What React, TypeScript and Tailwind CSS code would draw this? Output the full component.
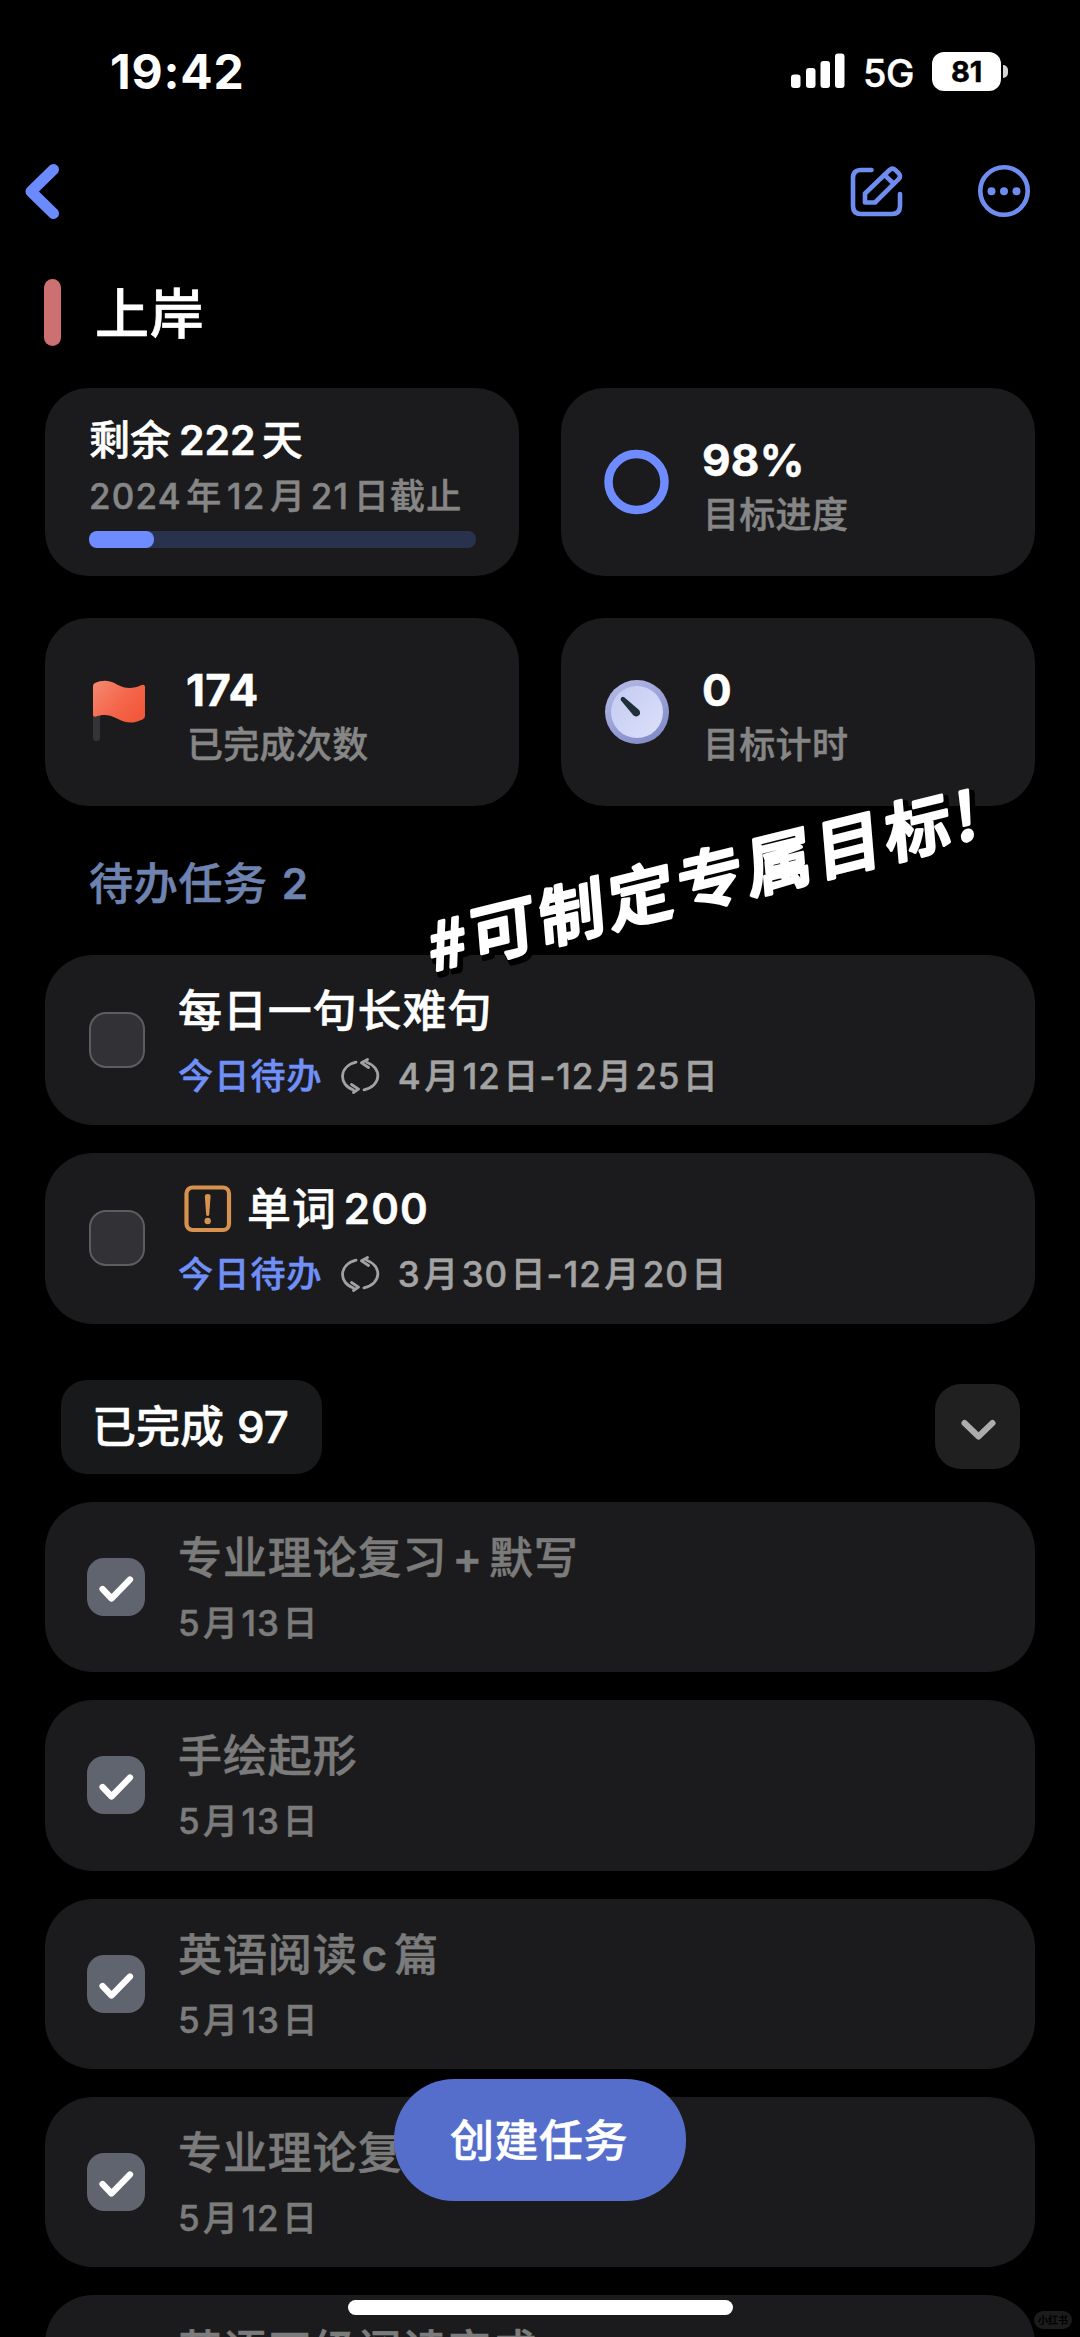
import type { ReactNode } from "react";

const SANS = "font-['Inter','Noto_Sans_CJK_SC',sans-serif]";

// Splits a date such as 4月12日 into number runs and ideographs, with a hair of air between them.
function DateText({ text, wide = false }: { text: string; wide?: boolean }) {
  const runs = text.split(/(\d+)/).filter(Boolean);
  return (
    <>
      {runs.map((run, i) => {
        if (!/\d/.test(run)) return <span key={i}>{run}</span>;
        const afterDash = i > 0 && runs[i - 1].endsWith("-");
        const flush = i === 0 || afterDash;
        if (wide) return <span key={i} className={flush ? "mr-[4.600px]" : "mx-[4.600px]"}>{run}</span>;
        return <span key={i} className={flush ? "mr-[2.500px]" : "mx-[2.500px]"}>{run}</span>;
      })}
    </>
  );
}

function StatusBar() {
  return (
    <div className="flex h-[142px] shrink-0 items-start justify-between pl-[110px] pr-[72px] pt-[52px]">
      <div className="h-10 text-[48px] font-bold leading-10 tracking-[0.800px] [-webkit-text-stroke:0px]">19:42</div>
      <div className="-mt-px flex h-10 items-center">
        <svg width="54" height="36" viewBox="0 0 54 36" fill="#fff">
          <rect x="0" y="21.5" width="9.5" height="13.5" rx="3" />
          <rect x="15" y="15" width="9.5" height="20" rx="3" />
          <rect x="29.5" y="8" width="9.5" height="27" rx="3" />
          <rect x="44" y="0.5" width="9.5" height="34.5" rx="3" />
        </svg>
        <div className="ml-[18px] w-[52px] pt-1 text-[38px] font-medium leading-9 tracking-[-0.500px]">5G</div>
        <div className="ml-[17px] flex h-[39px] w-[69px] items-center justify-center rounded-[12px] bg-white text-[29px] font-bold leading-none tracking-[-0.200px] text-black">
          81
        </div>
        <div className="ml-[2px] h-[13px] w-[5px] rounded-r-full bg-[#d5d5d5]" />
      </div>
    </div>
  );
}

function NavBar() {
  return (
    <div className="flex h-[98px] shrink-0 items-center justify-between pl-[23px] pr-[49px]">
      <svg width="40" height="60" viewBox="0 0 40 60" fill="none" stroke="#6b8afd" strokeWidth="11" strokeLinecap="round" strokeLinejoin="round">
        <path d="M30.5 8.500L8 30.500L30.500 52.500" />
      </svg>
      <div className="flex items-center gap-[74px]">
        <svg width="54" height="54" viewBox="0 0 54 54" fill="none" stroke="#6f8cf0" strokeWidth="4.600" strokeLinecap="round" strokeLinejoin="round">
          <path d="M22.500 6H12Q4 6 4 14V42Q4 50 12 50H43Q51 50 51 42V30" />
          <path d="M16 38V29L40.500 5.500Q43.500 2.800 46.500 5.600L49.800 8.900Q52.200 11.800 49.600 14.600L26 38Z" transform="translate(0 0.500)" />
          <path d="M35.500 11L44.500 19.500" />
        </svg>
        <svg width="54" height="54" viewBox="0 0 54 54">
          <circle cx="27" cy="27" r="23.700" fill="none" stroke="#6f8cf0" strokeWidth="4.600" />
          <circle cx="14.500" cy="27.300" r="4" fill="#6f8cf0" />
          <circle cx="27" cy="27.300" r="4" fill="#6f8cf0" />
          <circle cx="39.500" cy="27.300" r="4" fill="#6f8cf0" />
        </svg>
      </div>
    </div>
  );
}

function StatCard({ icon, value, label }: { icon: ReactNode; value: string; label: string }) {
  return (
    <div className="flex h-[188px] items-center rounded-[44px] bg-[#1b1b1d] pl-[43px]">
      <div className="flex w-[98px] items-center">{icon}</div>
      <div className="flex flex-col pt-[12px]">
        <div className="h-[52px] text-[44px] font-bold leading-[52px] tracking-[0.300px]">{value}</div>
        <div className="h-[56px] pl-[1px] text-[36px] font-medium leading-[58px] tracking-[0.300px] text-[#868686]">{label}</div>
      </div>
    </div>
  );
}

function FlagIcon() {
  return (
    <svg width="66" height="66" viewBox="0 0 66 66">
      <defs>
        <linearGradient id="flag" x1="0" y1="0" x2="1" y2="0.700">
          <stop offset="0" stopColor="#f58a70" />
          <stop offset="0.600" stopColor="#f4664b" />
          <stop offset="1" stopColor="#f2583a" />
        </linearGradient>
      </defs>
      <rect x="5" y="30" width="7" height="32" rx="3" fill="#343436" />
      <path d="M5 7Q5 5 7 4C15 0.500 22 1.500 29 5.500C38 10.500 46 9.500 53 6.200Q57 4.500 57 8.500V37Q57 39.500 54.500 40.500C45 45 38 44.500 29 39.500C21 35.500 15 35 8 37.500Q5 38.500 5 35.500Z" fill="url(#flag)" />
    </svg>
  );
}

function ClockIcon() {
  return (
    <svg width="66" height="66" viewBox="0 0 66 66">
      <defs>
        <linearGradient id="rim" x1="0.200" y1="0" x2="0.800" y2="1">
          <stop offset="0" stopColor="#b4b9e8" />
          <stop offset="1" stopColor="#8089c4" />
        </linearGradient>
        <linearGradient id="face" x1="0" y1="0" x2="1" y2="1">
          <stop offset="0" stopColor="#c5cbf1" />
          <stop offset="1" stopColor="#dbe0fa" />
        </linearGradient>
      </defs>
      <circle cx="33" cy="33" r="32" fill="url(#rim)" />
      <circle cx="33" cy="33" r="26" fill="url(#face)" />
      <path d="M17 21.500Q16 19.500 17.500 18.300Q19 17.300 20.500 18.500L34.500 30.500Q37 33 35.500 35.800Q33 39 29.500 36.500Z" fill="#20303a" />
    </svg>
  );
}

function RepeatIcon() {
  return (
    <svg width="39" height="36" viewBox="0 0 39 36" fill="none" stroke="#a2a2a2" strokeWidth="2.800" strokeLinecap="round" strokeLinejoin="round">
      <path d="M15 4.200C-2.500 8.500-2.500 27 12.500 32" />
      <path d="M10.500 26.500L17.500 31.200L12.500 34.500" />
      <path d="M23 31.800C41 27.500 41 9.500 25.500 4.200" />
      <path d="M27.500 9.500L20.500 4.800L26.500 1.500" />
    </svg>
  );
}

function PriorityIcon() {
  return (
    <svg className="ml-[6px] mr-[15px]" width="48" height="48" viewBox="0 0 48 48">
      <rect x="2.500" y="2.500" width="42.500" height="42.500" rx="6" fill="none" stroke="#d8924f" strokeWidth="4.200" />
      <path d="M20.800 11Q21 9 23.700 9Q26.600 9 26.600 11L25.200 30Q24.800 31 23.700 31Q22.600 31 22.200 30Z" fill="#d8924f" />
      <circle cx="23.700" cy="36" r="3.200" fill="#d8924f" />
    </svg>
  );
}

function OpenTask({ title, range, count }: { title: string; range: string; count?: string }) {
  return (
    <div className="flex h-[170.400px] shrink-0 items-start rounded-[48px] bg-[#1b1b1d] pl-[44px]">
      <div className="mt-[57px] size-[56px] rounded-[17px] border-[2.500px] border-[#5a5d61] bg-[#323135]" />
      <div className="ml-[33px] flex flex-col pt-[26px]">
        <div className="flex h-[60px] items-center text-[44px] font-medium leading-[60px] tracking-[0.900px]">
          {count ? <PriorityIcon /> : null}
          <span>{title}</span>
          {count ? <span className="ml-[7px] text-[42px] font-semibold tracking-[1.200px]">{count}</span> : null}
        </div>
        <div className="mt-[8px] flex h-[54px] items-center text-[35px] font-medium leading-[54px] tracking-[1.200px]">
          <span className="text-[#7090f8]">今日待办</span>
          <span className="mx-[18px]"><RepeatIcon /></span>
          <span className="tracking-[0.950px] text-[#a3a3a3]"><DateText text={range} /></span>
        </div>
      </div>
    </div>
  );
}

function DoneTask({ title, date }: { title: ReactNode; date: string }) {
  return (
    <div className="flex h-[170.400px] shrink-0 items-start rounded-[48px] bg-[#1b1b1d] pl-[42px]">
      <div className="mt-[56px] size-[58px] rounded-[17px] bg-[#60646e]">
        <svg width="58" height="58" viewBox="0 0 58 58" fill="none" stroke="#fff" strokeWidth="6.200" strokeLinecap="round" strokeLinejoin="round">
          <path d="M15.500 31L24.500 40.500L43 21.500" />
        </svg>
      </div>
      <div className="ml-[33px] flex flex-col pt-[26px] text-[#7b7b7b]">
        <div className="h-[60px] whitespace-nowrap text-[44px] font-medium leading-[60px] tracking-[0.900px]">{title}</div>
        <div className="mt-[8px] h-[54px] text-[35px] font-medium leading-[54px] tracking-[0.950px]"><DateText text={date} /></div>
      </div>
    </div>
  );
}

function Banner() {
  return (
    <svg className="pointer-events-none absolute left-[400px] top-[760px]" width="620" height="240" viewBox="0 0 620 240">
      <g transform="translate(31 212) rotate(-13.800) skewX(-9) scale(1.070 1.040)" fontFamily="'Noto Sans CJK SC', sans-serif" fontWeight="500" fontSize="62" strokeLinejoin="round" strokeLinecap="round">
        <text x="3" y="4" fill="#000" stroke="#000" strokeWidth="7" letterSpacing="4.600">#可制定专属目标!</text>
        <text x="0" y="0" fill="#fff" stroke="#fff" strokeWidth="3" letterSpacing="4.600">#可制定专属目标!</text>
      </g>
    </svg>
  );
}

export default function App() {
  return (
    <div className={`relative flex h-[2337px] w-[1080px] flex-col overflow-hidden bg-black text-white [-webkit-text-stroke:0.500px] ${SANS}`}>
      <StatusBar />
      <NavBar />

      <div className="mt-[39px] flex h-[67px] shrink-0 items-center pl-[44px]">
        <div className="h-[67px] w-[17px] rounded-full bg-[#cc7072]" />
        <h1 className="ml-[34px] pt-[3px] text-[54px] font-medium leading-[67px] tracking-[0.800px] [-webkit-text-stroke:0.700px]">上岸</h1>
      </div>

      <div className="mt-[42px] grid shrink-0 grid-cols-[474px_474px] gap-x-[42px] gap-y-[41.500px] pl-[45px]">
        <div className="flex h-[188px] flex-col rounded-[44px] bg-[#1b1b1d] px-[44px] pt-[24px]">
          <div className="flex h-[56px] items-center text-[41px] font-medium leading-[56px]">
            <span>剩余</span>
            <span className="ml-[8px] mr-[6px] text-[41px] font-semibold">222</span>
            <span>天</span>
          </div>
          <div className="h-[54px] whitespace-nowrap pt-px text-[35px] font-medium leading-[54px] tracking-[1.150px] text-[#868686]">
            <DateText text="2024年12月21日截止" wide />
          </div>
          <div className="mt-[9px] h-[17px] w-[387px] rounded-[8px] bg-[#29324c]">
            <div className="h-[17px] w-[65px] rounded-[8px] bg-[#6e8cff]" />
          </div>
        </div>
        <StatCard
          icon={
            <svg width="66" height="66" viewBox="0 0 66 66">
              <circle cx="32.500" cy="33" r="28" fill="none" stroke="#6e8cff" strokeWidth="8.500" />
            </svg>
          }
          value="98%"
          label="目标进度"
        />
        <StatCard icon={<FlagIcon />} value="174" label="已完成次数" />
        <StatCard icon={<ClockIcon />} value="0" label="目标计时" />
      </div>

      <div className="mt-[48px] flex h-[60px] shrink-0 items-center pl-[89px] text-[44px] font-medium leading-[60px] tracking-[0.700px] text-[#6f83b0]">
        <span>待办任务</span>
        <span className="ml-[14px] text-[42px] font-semibold">2</span>
      </div>

      <div className="mt-[41.500px] flex shrink-0 flex-col gap-[28px] px-[45px]">
        <OpenTask title="每日一句长难句" range="4月12日-12月25日" />
        <OpenTask title="单词" count="200" range="3月30日-12月20日" />
      </div>

      <div className="mt-[56px] flex h-[94px] shrink-0 items-center justify-between pl-[61px] pr-[60px]">
        <div className="flex h-[94px] w-[261px] items-center rounded-[26px] bg-[#17191a] pl-[31px] text-[44px] font-medium">
          <span>已完成</span>
          <span className="ml-[13px]">97</span>
        </div>
        <div className="flex size-[85px] items-center justify-center rounded-[26px] bg-[#202020]">
          <svg width="44" height="30" viewBox="0 0 44 30" fill="none" stroke="#acacac" strokeWidth="6" strokeLinecap="round" strokeLinejoin="round">
            <path d="M8.500 11L22.500 24.500L36.500 11" />
          </svg>
        </div>
      </div>

      <div className="mt-[28px] flex shrink-0 flex-col gap-[28px] px-[45px]">
        <DoneTask title={<>专业理论复习<span className="ml-[5px] mr-[6px] font-semibold">+</span>默写</>} date="5月13日" />
        <DoneTask title="手绘起形" date="5月13日" />
        <DoneTask title={<>英语阅读<span className="ml-[4px] mr-[6px] font-semibold">c</span>篇</>} date="5月13日" />
        <DoneTask title="专业理论复习" date="5月12日" />
        <DoneTask title="英语四级阅读完成" date="5月12日" />
      </div>

      <Banner />

      <button className="absolute left-[394px] top-[2079px] flex h-[122px] w-[292px] items-center justify-center rounded-[60px] bg-[#556ecb] pr-[2px] pt-[2px] text-[44px] font-medium tracking-[0.500px]">
        创建任务
      </button>
      <div className="absolute left-[348px] top-[2300px] h-[15px] w-[385px] rounded-full bg-white" />
      <div className="absolute left-[1034px] top-[2311px] flex h-[18px] w-[38px] items-center justify-center rounded-full bg-[#1c1c1c] text-[10px] font-bold leading-none text-black [-webkit-text-stroke:0px]">
        小红书
      </div>
    </div>
  );
}
